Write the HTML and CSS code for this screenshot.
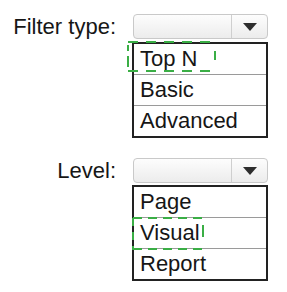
FILE: index.html
```html
<!DOCTYPE html>
<html>
<head>
<meta charset="utf-8">
<link rel="stylesheet" href="styles.css">
</head>
<body>
<div class="page">
  <div class="field field-filter">
    <div class="label">Filter type:</div>
    <div class="control">
      <div class="combo">
        <div class="combo-value"></div>
        <div class="combo-btn"><span class="arrow"></span></div>
      </div>
      <div class="list">
        <div class="item">Top N</div>
        <div class="item">Basic</div>
        <div class="item">Advanced</div>
      </div>
      <svg class="mark mark-filter" width="90" height="32" viewBox="0 0 90 32">
        <path d="M1 1 H88" stroke="#3aae45" stroke-width="2" fill="none" stroke-dasharray="10 8"/>
        <path d="M1 30 H88" stroke="#3aae45" stroke-width="2" fill="none" stroke-dasharray="10 8"/>
        <path d="M1 4 V29" stroke="#3aae45" stroke-width="2" fill="none" stroke-dasharray="6 5 11 4"/>
        <path d="M88 10 V28" stroke="#3aae45" stroke-width="2" fill="none" stroke-dasharray="9 20"/>
      </svg>
    </div>
  </div>
  <div class="field field-level">
    <div class="label">Level:</div>
    <div class="control">
      <div class="combo">
        <div class="combo-value"></div>
        <div class="combo-btn"><span class="arrow"></span></div>
      </div>
      <div class="list">
        <div class="item">Page</div>
        <div class="item">Visual</div>
        <div class="item">Report</div>
      </div>
      <svg class="mark mark-level" width="73" height="34" viewBox="0 0 73 34">
        <path d="M1 1 H71" stroke="#3aae45" stroke-width="2" fill="none" stroke-dasharray="9 6"/>
        <path d="M1 32 H71" stroke="#3aae45" stroke-width="2" fill="none" stroke-dasharray="9 6"/>
        <path d="M1 1 V33" stroke="#3aae45" stroke-width="2" fill="none" stroke-dasharray="8 6"/>
        <path d="M71 8 V28" stroke="#3aae45" stroke-width="2" fill="none" stroke-dasharray="12 20"/>
      </svg>
    </div>
  </div>
</div>
</body>
</html>
```
FILE: styles.css
```css
html, body {
  margin: 0;
  padding: 0;
  background: #ffffff;
}
.page {
  width: 287px;
  height: 292px;
  font-family: "Liberation Sans", Arial, sans-serif;
  color: #161616;
  padding-top: 14px;
  box-sizing: border-box;
  display: flex;
  flex-direction: column;
  gap: 20px;
}
.field {
  display: grid;
  grid-template-columns: 116px 136px;
  column-gap: 16px;
  align-items: start;
}
.label {
  justify-self: end;
  font-size: 22px;
  line-height: 25px;
}
.control {
  position: relative;
  display: flex;
  flex-direction: column;
}
.combo {
  margin-left: 1px;
  height: 25px;
  box-sizing: border-box;
  border: 1px solid #c9c9c9;
  border-radius: 4px;
  background: linear-gradient(#fdfdfd, #ececec);
  display: flex;
}
.combo-value {
  flex: 1;
}
.combo-btn {
  width: 35px;
  border-left: 1px solid #cfcfcf;
  display: flex;
  align-items: center;
  justify-content: center;
}
.arrow {
  width: 0;
  height: 0;
  border-left: 7px solid transparent;
  border-right: 7px solid transparent;
  border-top: 8px solid #2e2e2e;
  margin-top: 1px;
}
.list {
  margin-top: 3px;
  width: 136px;
  box-sizing: border-box;
  border: 2px solid #222222;
  background: #ffffff;
}
.field-level .list {
  margin-top: 2px;
}
.item {
  height: 30px;
  line-height: 30px;
  font-size: 22px;
  padding-left: 6px;
}
.item + .item {
  border-top: 1px solid #9a9a9a;
}
.mark {
  position: absolute;
  display: block;
}
.mark-filter {
  left: -5px;
  top: 27px;
}
.mark-level {
  left: 0px;
  top: 59px;
}
```
